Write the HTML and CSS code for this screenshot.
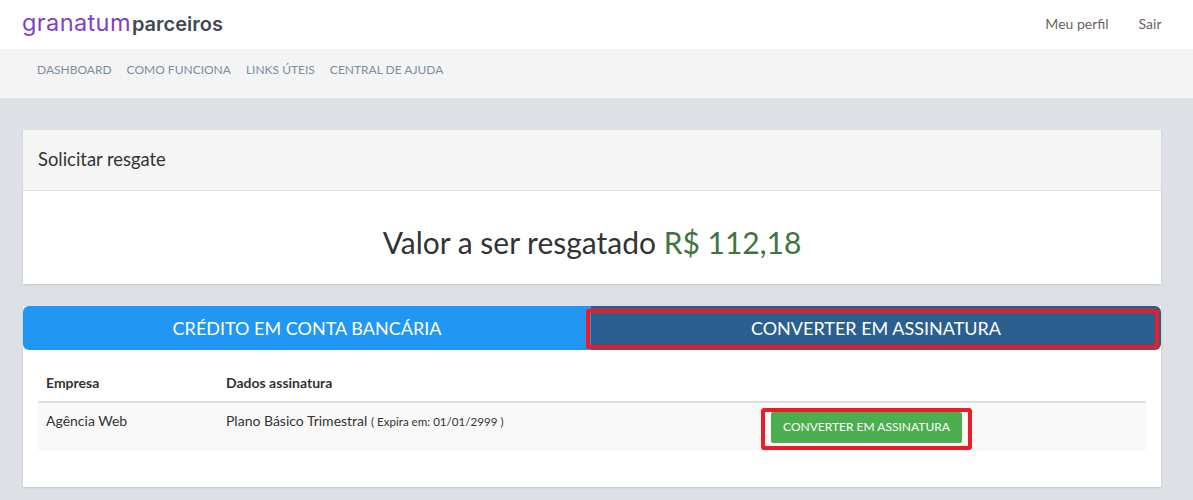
FILE: index.html
```html
<!DOCTYPE html>
<html lang="pt-BR">
<head>
  <meta charset="UTF-8">
  <title>Solicitar resgate</title>
  <link rel="stylesheet" href="styles.css">
</head>
<body>
  <header class="topbar">
    <a class="logo" href="#"><span class="logo-main">granatum</span><span class="logo-sub">parceiros</span></a>
    <nav class="user-menu">
      <a href="#">Meu perfil</a>
      <a href="#">Sair</a>
    </nav>
  </header>
  <nav class="subnav">
    <a href="#">DASHBOARD</a>
    <a href="#">COMO FUNCIONA</a>
    <a href="#">LINKS ÚTEIS</a>
    <a href="#">CENTRAL DE AJUDA</a>
  </nav>
  <main class="content">
    <section class="card">
      <div class="card-head">Solicitar resgate</div>
      <div class="amount">Valor a ser resgatado <span class="green">R$ 112,18</span></div>
    </section>
    <section class="card card-tabs">
      <div class="tabs">
        <a class="tab tab-blue" href="#">CRÉDITO EM CONTA BANCÁRIA</a>
        <a class="tab tab-dark" href="#">CONVERTER EM ASSINATURA</a>
        <span class="mark mark-tab"></span>
      </div>
      <div class="table-wrap">
        <table class="plans">
          <thead>
            <tr>
              <th class="col-company">Empresa</th>
              <th class="col-plan">Dados assinatura</th>
              <th></th>
            </tr>
          </thead>
          <tbody>
            <tr>
              <td>Agência Web</td>
              <td>Plano Básico Trimestral <small>( Expira em: 01/01/2999 )</small></td>
              <td class="col-action">
                <span class="btn-wrap">
                  <a class="btn-green" href="#">CONVERTER EM ASSINATURA</a>
                  <span class="mark mark-btn"></span>
                </span>
              </td>
            </tr>
          </tbody>
        </table>
      </div>
    </section>
  </main>
</body>
</html>
```

FILE: styles.css
```css
* {
    box-sizing: border-box;
}

body {
    margin: 0;
    background: #dde1e5;
    color: #333;
    font-family: "Lato", "Liberation Sans", sans-serif;
    font-size: 14px;
}

a {
    text-decoration: none;
}

.topbar {
    height: 49px;
    background: #fff;
    display: flex;
    align-items: center;
    justify-content: space-between;
    padding: 0 31.5px 2px 22px;
}

.logo {
    display: flex;
    align-items: baseline;
    font-family: "Inter", "Lato", sans-serif;
    line-height: 24px;
}

.logo-main {
    color: #7f3fc9;
    font-size: 23.5px;
    font-weight: 400;
    letter-spacing: 0.4px;
}

.logo-sub {
    color: #3f4a54;
    font-weight: 600;
    font-size: 20px;
    margin-left: 1px;
}

.user-menu {
    display: flex;
    gap: 30px;
}

.user-menu a {
    color: #6b6461;
    font-size: 14px;
}

.subnav {
    height: 49px;
    background: #f4f4f4;
    display: flex;
    gap: 15px;
    padding: 13px 0 0 37px;
}

.subnav a {
    color: #7c8ea0;
    font-size: 12px;
    line-height: 15px;
}

.content {
    padding: 32px 32px 0 23px;
}

.card {
    background: #fff;
    box-shadow: 0 1px 2px rgba(0, 0, 0, 0.12);
    margin-bottom: 22px;
}

.card-head {
    height: 61px;
    line-height: 58px;
    padding-left: 15px;
    background: #f5f5f5;
    border-bottom: 1px solid #ddd;
    font-size: 18.4px;
    color: #333;
}

.amount {
    height: 93px;
    padding-top: 33px;
    text-align: center;
    font-size: 30px;
    line-height: 36px;
    color: #333;
}

.green {
    color: #3c763d;
}

.card-tabs {
    height: 181px;
}

.tabs {
    position: relative;
    display: flex;
    height: 44px;
    border-radius: 6px;
    overflow: hidden;
}

.tab {
    text-align: center;
    color: #fff;
    font-size: 18px;
    line-height: 45px;
}

.tab-blue {
    width: 568px;
    background: #2196f3;
}

.tab-dark {
    flex: 1;
    background: #2b5f8f;
}

.mark {
    position: absolute;
    border: 4px solid #ed1c24;
    border-radius: 3px;
}

.mark-tab {
    left: 563px;
    right: 2px;
    top: 3px;
    bottom: 1px;
}

.table-wrap {
    padding: 15px 15px 0;
}

.plans {
    width: 100%;
    border-collapse: collapse;
    table-layout: fixed;
}

.plans th {
    height: 37px;
    padding: 0 8px 2px;
    text-align: left;
    border-bottom: 2px solid #ddd;
    font-size: 14px;
    font-weight: 700;
}

.col-company {
    width: 180px;
}

.col-plan {
    width: 541px;
}

.plans td {
    height: 49px;
    padding: 8px;
    vertical-align: top;
    background: #f9f9f9;
    line-height: 20px;
}

.plans small {
    font-size: 11.6px;
}

.plans .col-action {
    padding: 9px 0 0 12px;
}

.btn-wrap {
    position: relative;
    display: block;
    width: 191px;
}

.btn-green {
    display: block;
    height: 31px;
    background: #4cae4f;
    border-radius: 2px;
    color: #fff;
    font-size: 12px;
    line-height: 29px;
    text-align: center;
}

.mark-btn {
    left: -10px;
    right: -10px;
    top: -4px;
    bottom: -7px;
}
```
